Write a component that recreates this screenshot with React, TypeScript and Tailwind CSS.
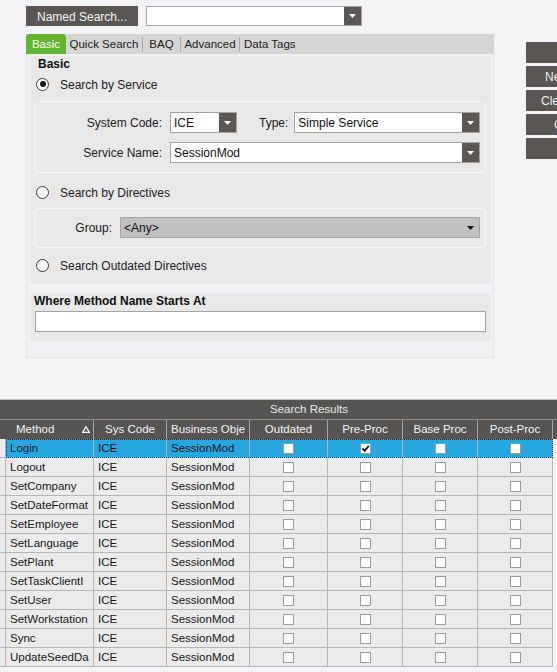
import React from 'react';

const rows = [
  'Login',
  'Logout',
  'SetCompany',
  'SetDateFormat',
  'SetEmployee',
  'SetLanguage',
  'SetPlant',
  'SetTaskClientI',
  'SetUser',
  'SetWorkstation',
  'Sync',
  'UpdateSeedDa',
];

const Caret: React.FC<{ color?: string }> = ({ color = '#ffffff' }) => (
  <svg width="7" height="4" viewBox="0 0 7 4">
    <polygon points="0,0 7,0 3.5,4" fill={color} />
  </svg>
);

const Combo: React.FC<{ value?: string; className?: string; disabled?: boolean }> = ({ value = '', className = '', disabled }) => (
  <div
    className={`h-[21px] flex items-stretch border border-[#a3a3a3] ${disabled ? 'bg-[#c0c0c0]' : 'bg-white'} ${className}`}
  >
    <div className="flex-1 flex items-center pl-[3px] pt-px text-[12px] text-[#111] whitespace-nowrap overflow-hidden">{value}</div>
    {disabled ? (
      <div className="w-[18px] flex items-center justify-center">
        <Caret color="#111" />
      </div>
    ) : (
      <div className="w-[17px] bg-[#5a5754] flex items-center justify-center">
        <Caret />
      </div>
    )}
  </div>
);

const Radio: React.FC<{ checked?: boolean; label: string; className?: string }> = ({ checked, label, className = '' }) => (
  <div className={`h-[16px] flex items-center pl-[6px] ${className}`}>
    <div className="w-[13px] h-[13px] rounded-full border border-[#3a3a3a] bg-white flex items-center justify-center">
      {checked && <div className="w-[6px] h-[6px] rounded-full bg-[#1a1a1a]" />}
    </div>
    <span className="ml-[11px] pt-px text-[12px] text-[#1b1b1b]">{label}</span>
  </div>
);

const CheckBox: React.FC<{ checked?: boolean }> = ({ checked }) => (
  <div className="w-[11px] h-[11px] border border-[#9c9c9c] bg-white flex items-center justify-center">
    {checked && (
      <svg width="9" height="9" viewBox="0 0 9 9">
        <path d="M1.5 4.5 L3.5 6.8 L7.8 1.8" stroke="#111" strokeWidth="1.8" fill="none" />
      </svg>
    )}
  </div>
);

const SortIcon: React.FC = () => (
  <svg width="8" height="7" viewBox="0 0 8 7">
    <polygon points="4,0.8 7.3,6.3 0.7,6.3" fill="none" stroke="#ffffff" strokeWidth="1.2" />
  </svg>
);

const tabs = [
  { label: 'Quick Search', w: 'w-[77px]' },
  { label: 'BAQ', w: 'w-[38px]' },
  { label: 'Advanced', w: 'w-[59px]' },
];

// buttons run off the right edge of the window, as in the app
const sideButtons = [
  { label: 'Search', pl: 'pl-[40px]' },
  { label: 'New', pl: 'pl-[19px]' },
  { label: 'Clear', pl: 'pl-[15px]' },
  { label: 'Close', pl: 'pl-[28px]' },
  { label: 'Help', pl: 'pl-[40px]' },
];

const colW = ['w-[88px]', 'w-[73px]', 'w-[83px]', 'w-[78px]', 'w-[75px]', 'w-[75px]', 'w-[75px]'];

export default function App() {
  return (
    <div className="w-[557px] h-[672px] overflow-hidden bg-[#f3f3f5] flex flex-col font-['Liberation_Sans',Arial,sans-serif] text-[#1b1b1b]">
      {/* upper search form */}
      <div className="h-[399px] shrink-0 flex flex-col">
        <div className="flex items-center pt-[6px] pl-[26px] gap-[8px]">
          <div className="w-[112px] h-[20px] bg-[#595653] text-[#f2f2f2] text-[12px] flex items-center justify-center pt-px">
            Named Search...
          </div>
          <div className="w-[216px] h-[20px] flex items-stretch border border-[#a3a3a3] bg-white">
            <div className="flex-1" />
            <div className="w-[17px] bg-[#5a5754] flex items-center justify-center">
              <Caret />
            </div>
          </div>
        </div>

        <div className="flex mt-[8px]">
          <div className="ml-[26px] w-[468px] shrink-0 flex flex-col">
            {/* tabs */}
            <div className="h-[20px] bg-[#d5d5d5] flex items-stretch text-[11.5px]">
              <div className="w-[40px] bg-[#63b42f] text-white rounded-t-[4px] flex items-center justify-center pt-px">Basic</div>
              {tabs.map(t => (
                <div key={t.label} className={`${t.w} flex items-center`}>
                  <span className="flex-1 text-center pt-px">{t.label}</span>
                  <span className="w-px h-[15px] bg-[#ababab]" />
                </div>
              ))}
              <div className="flex items-center pl-[4px] pt-px">Data Tags</div>
            </div>

            {/* tab page */}
            <div className="h-[304px] border border-t-0 border-[#e4e4e6] bg-[#f0f0f2] pl-[3px] pr-[2px] pt-[2px] flex flex-col">
              <div className="h-[228px] bg-[#e8e8e8] rounded-[4px] flex flex-col">
                <div className="h-[14px] leading-[14px] pl-[8px] pt-px text-[12px] font-bold text-[#111]">Basic</div>
                <Radio checked label="Search by Service" className="mt-[6px]" />

                <div className="mt-[9px] mx-[5px] h-[72px] border border-[#f5f5f5] rounded-[3px] pt-[10px] pr-[5px] flex flex-col gap-[9px]">
                  <div className="flex items-center">
                    <div className="w-[126px] text-right text-[12px] pt-px">System Code:</div>
                    <Combo value="ICE" className="ml-[8px] w-[67px]" />
                    <div className="ml-[22px] text-[12px] pt-px">Type:</div>
                    <Combo value="Simple Service" className="ml-[6px] flex-1" />
                  </div>
                  <div className="flex items-center">
                    <div className="w-[126px] text-right text-[12px] pt-px">Service Name:</div>
                    <Combo value="SessionMod" className="ml-[8px] flex-1" />
                  </div>
                </div>

                <Radio label="Search by Directives" className="mt-[11px]" />

                <div className="mt-[8px] mx-[5px] h-[40px] border border-[#f5f5f5] rounded-[3px] pt-[8px] pr-[5px] flex items-start">
                  <div className="w-[76px] h-[21px] flex items-center justify-end text-[12px] pt-px">Group:</div>
                  <Combo value="<Any>" disabled className="ml-[8px] flex-1" />
                </div>

                <Radio label="Search Outdated Directives" className="mt-[9px]" />
              </div>

              <div className="mt-[9px] h-[48px] bg-[#e8e8e8] rounded-[4px] flex flex-col">
                <div className="h-[14px] leading-[14px] pl-[4px] pt-px text-[12px] font-bold text-[#111]">Where Method Name Starts At</div>
                <div className="mt-[4px] mx-[5px] h-[21px] border border-[#a3a3a3] bg-white" />
              </div>
            </div>
          </div>

          {/* side buttons */}
          <div className="ml-[32px] mt-[8px] flex flex-col gap-[3px] shrink-0">
            {sideButtons.map(b => (
              <div
                key={b.label}
                className={`w-[80px] h-[21px] bg-[#595653] text-[#f0f0f0] text-[12px] flex items-center whitespace-nowrap pt-px ${b.pl}`}
              >
                {b.label}
              </div>
            ))}
          </div>
        </div>
      </div>

      {/* search results grid */}
      <div className="h-px bg-[#bdbdbd] shrink-0" />
      <div className="h-[19px] bg-[#575553] text-[#e8e8e8] text-[11.5px] flex items-center pl-[270px] pt-px shrink-0">
        Search Results
      </div>
      <div className="h-px bg-[#8c8c8c] shrink-0" />
      <div className="h-[19px] bg-[#575553] text-[#f4f4f4] text-[11.5px] flex items-stretch shrink-0">
        <div className="w-[6px]" />
        <div className={`${colW[0]} border-r border-[#a6a6a6] flex items-center pl-[10px] pr-[3px]`}>
          <span className="flex-1 pt-px">Method</span>
          <SortIcon />
        </div>
        <div className={`${colW[1]} border-r border-[#a6a6a6] flex items-center justify-center pt-px`}>Sys Code</div>
        <div className={`${colW[2]} border-r border-[#a6a6a6] flex items-start pt-[1px] pl-[4px] whitespace-nowrap overflow-hidden`}>Business Obje</div>
        <div className={`${colW[3]} border-r border-[#a6a6a6] flex items-center justify-center pt-px`}>Outdated</div>
        <div className={`${colW[4]} border-r border-[#a6a6a6] flex items-center justify-center pt-px`}>Pre-Proc</div>
        <div className={`${colW[5]} border-r border-[#a6a6a6] flex items-center justify-center pt-px`}>Base Proc</div>
        <div className={`${colW[6]} border-r border-[#a6a6a6] flex items-center justify-center pt-px`}>Post-Proc</div>
        <div className="flex-1" />
      </div>

      {rows.map((name, i) => {
        const sel = i === 0;
        const cell = `border-r border-b border-[#b6b6b6] ${sel ? 'bg-[#27a7e0]' : 'bg-[#ebebeb]'}`;
        return (
          <div key={name} className="h-[19px] flex items-stretch text-[11.5px] text-[#161616] shrink-0">
            <div className="w-[6px] border-r border-b border-[#b6b6b6] bg-[#ebebeb]" />
            <div className={`flex items-stretch ${sel ? 'outline-1 outline-dotted outline-[#3a2a10] -outline-offset-1' : ''}`}>
              <div className={`${colW[0]} ${cell} flex items-center pl-[4px] pt-px whitespace-nowrap overflow-hidden`}>{name}</div>
              <div className={`${colW[1]} ${cell} flex items-center pl-[4px] pt-px`}>ICE</div>
              <div className={`${colW[2]} ${cell} flex items-center pl-[4px] pt-px`}>SessionMod</div>
              <div className={`${colW[3]} ${cell} flex items-center justify-center`}>
                <CheckBox />
              </div>
              <div className={`${colW[4]} ${cell} flex items-center justify-center`}>
                <CheckBox checked={sel} />
              </div>
              <div className={`${colW[5]} ${cell} flex items-center justify-center`}>
                <CheckBox />
              </div>
              <div className={`${colW[6]} ${cell} flex items-center justify-center`}>
                <CheckBox />
              </div>
            </div>
            <div className="flex-1" />
          </div>
        );
      })}
    </div>
  );
}
